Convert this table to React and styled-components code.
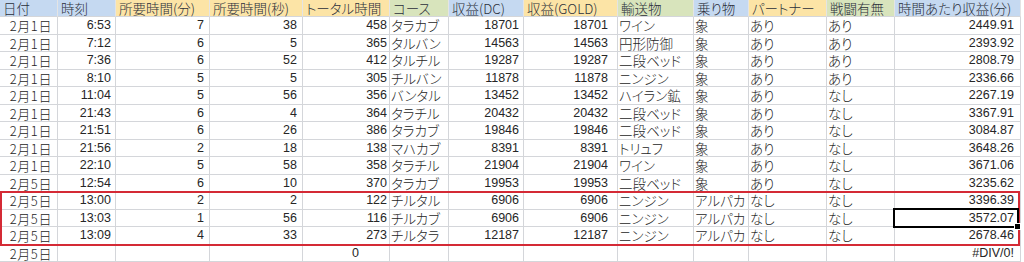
import React from "react";
import styled, { createGlobalStyle } from "styled-components";

const GlobalStyle = createGlobalStyle`
	body {
		margin: 0;
		background: #ffffff;
	}
`;

const BLUE = "#c5d9f1";
const YELLOW = "#fce4a6";
const GREEN = "#d8e4bc";
const GRID = "#d4d6da";

// column widths follow the sheet in the screenshot
const widths = [58, 58, 94, 93, 87, 59, 75, 94, 76, 55, 78, 68, 126];

const headers = [
	["日付", BLUE],
	["時刻", BLUE],
	["所要時間(分)", YELLOW],
	["所要時間(秒)", YELLOW],
	["トータル時間", YELLOW],
	["コース", GREEN],
	["収益(DC)", BLUE],
	["収益(GOLD)", YELLOW],
	["輸送物", GREEN],
	["乗り物", BLUE],
	["パートナー", YELLOW],
	["戦闘有無", GREEN],
	["時間あたり収益(分)", BLUE],
];

// kind of each column: date, num or text
const kinds = ["date", "num", "num", "num", "num", "text", "num", "num", "text", "text", "text", "text", "num"];
const padRight = [5, 4, 5, 5, 2, 0, 4, 9, 0, 0, 0, 0, 6];

const rows = [
	["2月1日", "6:53", "7", "38", "458", "タラカブ", "18701", "18701", "ワイン", "象", "あり", "あり", "2449.91"],
	["2月1日", "7:12", "6", "5", "365", "タルバン", "14563", "14563", "円形防御", "象", "あり", "あり", "2393.92"],
	["2月1日", "7:36", "6", "52", "412", "タルチル", "19287", "19287", "二段ベッド", "象", "あり", "あり", "2808.79"],
	["2月1日", "8:10", "5", "5", "305", "チルバン", "11878", "11878", "ニンジン", "象", "あり", "あり", "2336.66"],
	["2月1日", "11:04", "5", "56", "356", "バンタル", "13452", "13452", "ハイラン鉱", "象", "あり", "なし", "2267.19"],
	["2月1日", "21:43", "6", "4", "364", "タラチル", "20432", "20432", "二段ベッド", "象", "あり", "なし", "3367.91"],
	["2月1日", "21:51", "6", "26", "386", "タラカブ", "19846", "19846", "二段ベッド", "象", "あり", "なし", "3084.87"],
	["2月1日", "21:56", "2", "18", "138", "マハカブ", "8391", "8391", "トリュフ", "象", "あり", "なし", "3648.26"],
	["2月1日", "22:10", "5", "58", "358", "タラチル", "21904", "21904", "ワイン", "象", "あり", "なし", "3671.06"],
	["2月5日", "12:54", "6", "10", "370", "タラカブ", "19953", "19953", "二段ベッド", "象", "あり", "なし", "3235.62"],
	["2月5日", "13:00", "2", "2", "122", "チルタル", "6906", "6906", "ニンジン", "アルパカ", "なし", "なし", "3396.39"],
	["2月5日", "13:03", "1", "56", "116", "チルカブ", "6906", "6906", "ニンジン", "アルパカ", "なし", "なし", "3572.07"],
	["2月5日", "13:09", "4", "33", "273", "チルタラ", "12187", "12187", "ニンジン", "アルパカ", "なし", "なし", "2678.46"],
	["2月5日", "", "", "", "0", "", "", "", "", "", "", "", "#DIV/0!"],
];

function App() {
	return (
		<>
			<GlobalStyle />
			<Sheet>
				<Grid>
					{headers.map(([label, bg]) => (
						<HeadCell key={label} $bg={bg}>{label}</HeadCell>
					))}
					{rows.map((row, r) =>
						row.map((value, c) => (
							<Cell
								key={r + "-" + c}
								$kind={kinds[c]}
								$pad={r === rows.length - 1 && c === 4 ? 30 : padRight[c]}
							>
								{value}
							</Cell>
						))
					)}
				</Grid>
				<RedFrame />
				<Selection>
					<FillHandle />
				</Selection>
			</Sheet>
		</>
	);
}

export default App;

const Sheet = styled.div`
	position: relative;
	width: 1024px;
	height: 262px;
	overflow: hidden;
	background: #ffffff;
`;

const Grid = styled.div`
	display: grid;
	grid-template-columns: ${widths.map((w) => w + "px").join(" ")};
	grid-template-rows: 17px;
	grid-auto-rows: 17.5px;
`;

const HeadCell = styled.div`
	box-sizing: border-box;
	background: ${(p) => p.$bg};
	border-right: 1px solid #e4e4e4;
	border-bottom: 1px solid ${GRID};
	padding: 1px 0 0 3px;
	font-family: "Noto Sans CJK JP", sans-serif;
	font-feature-settings: "palt";
	font-weight: 300;
	font-size: 13.5px;
	line-height: 15px;
	color: #2b2f3a;
	white-space: nowrap;
`;

const Cell = styled.div`
	box-sizing: border-box;
	border-right: 1px solid ${GRID};
	border-bottom: 1px solid ${GRID};
	padding-left: 1px;
	padding-right: ${(p) => p.$pad}px;
	text-align: ${(p) => (p.$kind === "text" ? "left" : "right")};
	font-family: ${(p) =>
		p.$kind === "num"
			? `"Liberation Sans", "Noto Sans CJK JP", sans-serif`
			: `"Noto Sans CJK JP", sans-serif`};
	font-feature-settings: "palt";
	font-weight: ${(p) => (p.$kind === "num" ? 400 : 300)};
	font-size: ${(p) => (p.$kind === "num" ? "12.5px" : p.$kind === "date" ? "13px" : "13.5px")};
	letter-spacing: ${(p) => (p.$kind === "date" ? "0.6px" : "0")};
	line-height: 17px;
	color: #262626;
	white-space: nowrap;
`;

const RedFrame = styled.div`
	position: absolute;
	left: 0;
	top: 191px;
	width: 1020px;
	height: 55px;
	box-sizing: border-box;
	border: 2px solid #d42a35;
	pointer-events: none;
`;

const Selection = styled.div`
	position: absolute;
	left: 893px;
	top: 208px;
	width: 126px;
	height: 20px;
	box-sizing: border-box;
	border: 2px solid #000000;
	pointer-events: none;
`;

const FillHandle = styled.div`
	position: absolute;
	right: -4px;
	bottom: -4px;
	width: 5px;
	height: 5px;
	background: #000000;
	border: 1px solid #ffffff;
`;
